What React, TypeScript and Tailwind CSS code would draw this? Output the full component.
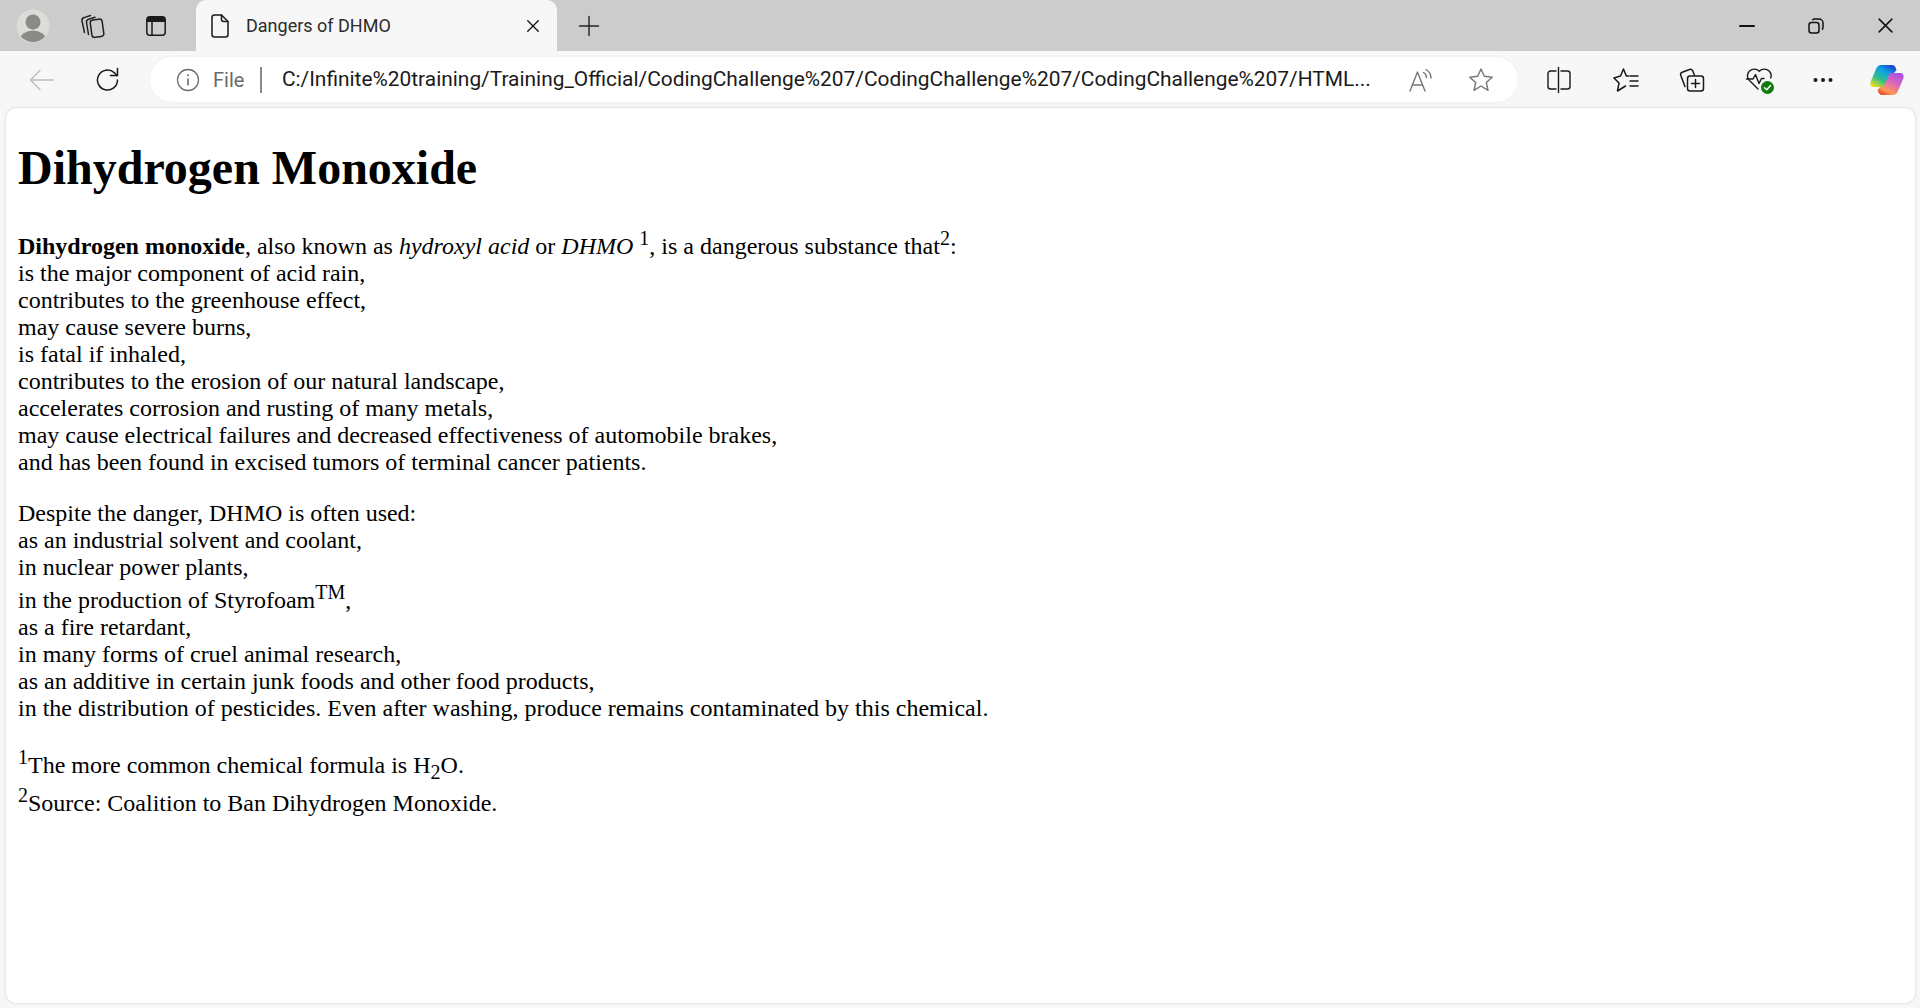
import React from 'react';

const stroke = { fill: 'none', stroke: '#222', strokeWidth: 1.5, strokeLinecap: 'round', strokeLinejoin: 'round' } as const;

const Avatar = () => (
  <svg width="34" height="34" viewBox="0 0 34 34">
    <defs>
      <clipPath id="av"><circle cx="17" cy="17" r="16" /></clipPath>
    </defs>
    <circle cx="17" cy="17" r="16.5" fill="#dcdcd8" />
    <g clipPath="url(#av)" fill="#8b8a86">
      <circle cx="17" cy="13" r="7.5" />
      <ellipse cx="17" cy="31" rx="13" ry="9.5" />
    </g>
  </svg>
);

const CollectionsTab = () => (
  <svg width="26" height="26" viewBox="0 0 26 26" {...stroke}>
    <rect x="12" y="6.500" width="12" height="17.500" rx="3" transform="rotate(-8 18 15)" />
    <path d="M9.500 21.500 7.500 9.500a3 3 0 0 1 2.300-3.300L16 4.200" />
    <path d="M5.500 19.500 3 8a3 3 0 0 1 2.200-3.400L11.500 2.500" />
  </svg>
);

const TabsIcon = () => (
  <svg width="24" height="24" viewBox="0 0 24 24">
    <rect x="2.800" y="2.800" width="18.400" height="18.400" rx="3" fill="none" stroke="#1a1a1a" strokeWidth="1.500" />
    <path d="M5 2.800h14a2.200 2.200 0 0 1 2.200 2.200v3H2.800V5A2.200 2.200 0 0 1 5 2.800Z" fill="#1a1a1a" />
    <path d="M8 8v13" stroke="#1a1a1a" strokeWidth="1.500" />
  </svg>
);

const DocIcon = () => (
  <svg width="22" height="26" viewBox="0 0 22 26" {...stroke} stroke="#1a1a1a">
    <path d="M5 2h7.500L19 8.500V21.500A2.500 2.500 0 0 1 16.500 24h-11A2.500 2.500 0 0 1 3 21.500V4.500A2.500 2.500 0 0 1 5 2Z" />
    <path d="M12.500 2v4.500a2 2 0 0 0 2 2H19" />
  </svg>
);

const Cross = ({ size, width = 1.5 }: { size: number; width?: number }) => (
  <svg width={size} height={size} viewBox="0 0 16 16" fill="none" stroke="#111" strokeWidth={width} strokeLinecap="round">
    <path d="M2 2l12 12M14 2 2 14" />
  </svg>
);

const Plus = () => (
  <svg width="22" height="22" viewBox="0 0 22 22" fill="none" stroke="#222" strokeWidth="1.400" strokeLinecap="round">
    <path d="M11 1.500v19M1.500 11h19" />
  </svg>
);

const Minimize = () => (
  <svg width="16" height="4" viewBox="0 0 16 4"><rect y="1" width="16" height="2" rx="1" fill="#111" /></svg>
);

const Restore = () => (
  <svg width="16" height="16" viewBox="0 0 16 16" fill="none" stroke="#111" strokeWidth="1.500">
    <rect x="1" y="4.500" width="10" height="10.500" rx="2.500" />
    <path d="M4.500 2.200A2 2 0 0 1 6.200 1H11a4 4 0 0 1 4 4v4.800a2 2 0 0 1-1.200 1.700" />
  </svg>
);

const BackArrow = () => (
  <svg width="26" height="24" viewBox="0 0 26 24" fill="none" stroke="#bdbdbd" strokeWidth="1.400" strokeLinecap="round" strokeLinejoin="round">
    <path d="M1.500 12h23M11 2.500 1.500 12l9.500 9.500" />
  </svg>
);

const Refresh = () => (
  <svg width="26" height="28" viewBox="0 0 26 28" fill="none" stroke="#1a1a1a" strokeWidth="1.500" strokeLinecap="round" strokeLinejoin="round">
    <path d="M22.500 14a10 10 0 1 1-3.300-7.400l2.800 2.900" />
    <path d="M22.500 2.500v7h-7" />
  </svg>
);

const Info = () => (
  <svg width="24" height="24" viewBox="0 0 24 24" fill="none" stroke="#6e6e6e" strokeWidth="1.300">
    <circle cx="12" cy="12" r="10.500" />
    <path d="M12 10.500v7" strokeWidth="1.600" />
    <circle cx="12" cy="7.300" r="1" fill="#6e6e6e" stroke="none" />
  </svg>
);

const ReadAloud = () => (
  <svg width="26" height="26" viewBox="0 0 26 26" fill="none" stroke="#767676" strokeWidth="1.400" strokeLinecap="round" strokeLinejoin="round">
    <path d="M2 24 9.500 5 17 24M4.500 18h10" />
    <path d="M15.500 5.500a6 6 0 0 1 3 5M18 2.500a10 10 0 0 1 5 8.500" />
  </svg>
);

const Star = () => (
  <svg width="26" height="26" viewBox="0 0 26 26" fill="none" stroke="#767676" strokeWidth="1.400" strokeLinejoin="round">
    <path d="m13 2 3.300 7.300 7.900.9-5.900 5.300 1.700 7.800L13 19l-7 4.300 1.700-7.800-5.900-5.300 7.900-.9L13 2Z" />
  </svg>
);

const SplitView = () => (
  <svg width="26" height="28" viewBox="0 0 26 28" fill="none" stroke="#1a1a1a" strokeWidth="1.400" strokeLinecap="round">
    <path d="M10 5H4.500A2.500 2.500 0 0 0 2 7.500v13A2.500 2.500 0 0 0 4.500 23H10" />
    <path d="M15 5h6.500A2.500 2.500 0 0 1 24 7.500v13a2.500 2.500 0 0 1-2.500 2.500H15" />
    <path d="M12.500 1.500v25" />
  </svg>
);

const Favorites = () => (
  <svg width="26" height="28" viewBox="0 0 26 28" fill="none" stroke="#1a1a1a" strokeWidth="1.500" strokeLinecap="round" strokeLinejoin="round">
    <path d="M15.500 10h-2.200L10.500 3 7.500 10 1 12l5 5-1.500 8 8-5" />
    <path d="M17 10h8M17 15h8M17 20h8" />
  </svg>
);

const CollectionsAdd = () => (
  <svg width="26" height="28" viewBox="0 0 26 28" fill="none" stroke="#1a1a1a" strokeWidth="1.500" strokeLinecap="round" strokeLinejoin="round">
    <rect x="8.500" y="10" width="16" height="15" rx="2.500" />
    <path d="M16.500 13.500v8M12.500 17.500h8" />
    <path d="M6 20.500 1.800 9.500a2.500 2.500 0 0 1 1.400-3.200L10.500 3.500a2.500 2.500 0 0 1 3.200 1.300l1.800 4.500" />
  </svg>
);

const HeartCheck = () => (
  <svg width="30" height="30" viewBox="0 0 30 30">
    <path d="M13 24 4.500 15.500a6.500 6.500 0 0 1 0-9.500 7 7 0 0 1 9.800.2 7 7 0 0 1 9.800-.2 6.500 6.500 0 0 1 1.600 7" fill="none" stroke="#1a1a1a" strokeWidth="1.400" strokeLinecap="round" />
    <path d="M1.500 14H8l2.500-4.500 3.500 9 2.500-5h2.500" fill="none" stroke="#1a1a1a" strokeWidth="1.400" strokeLinecap="round" strokeLinejoin="round" />
    <circle cx="22.500" cy="22.500" r="6.500" fill="#107c10" />
    <path d="m19.500 22.700 2.200 2.100 3.800-4.200" fill="none" stroke="#fff" strokeWidth="1.500" strokeLinecap="round" strokeLinejoin="round" />
  </svg>
);

const Dots = () => (
  <svg width="20" height="6" viewBox="0 0 20 6" fill="#1a1a1a">
    <circle cx="2.500" cy="3" r="2" />
    <circle cx="10" cy="3" r="2" />
    <circle cx="17.500" cy="3" r="2" />
  </svg>
);

const Copilot = () => (
  <svg width="34" height="30" viewBox="0 0 34 30">
    <defs>
      <linearGradient id="cpA" x1="0.800" y1="0" x2="0.150" y2="1">
        <stop offset="0" stopColor="#1a3fd0" />
        <stop offset="0.300" stopColor="#0f9fe8" />
        <stop offset="0.650" stopColor="#30c090" />
        <stop offset="1" stopColor="#f5dc10" />
      </linearGradient>
      <linearGradient id="cpB" x1="0.800" y1="0" x2="0.200" y2="1">
        <stop offset="0" stopColor="#a850e8" />
        <stop offset="0.450" stopColor="#e068b8" />
        <stop offset="0.800" stopColor="#ff9a50" />
        <stop offset="1" stopColor="#e8452c" />
      </linearGradient>
    </defs>
    <path d="M11 0H22C24 0 25.500 1.500 26.500 5L24 8C21 8 20 9 19 11L14 22H4C1 22 0 20 .5 17L6 4C7 1.500 9 0 11 0Z" fill="url(#cpA)" />
    <path d="M23 30H12C10 30 8.500 28.500 7.500 25L10 22C13 22 14 21 15 19L20 8H30C33 8 34 10 33.500 13L28 26C27 28.500 25 30 23 30Z" fill="url(#cpB)" />
  </svg>
);

const Sup = ({ children }: { children: React.ReactNode }) => (
  <sup className="static align-super text-[20px] leading-[normal]">{children}</sup>
);

export default function App() {
  return (
    <div className="h-[1008px] overflow-hidden bg-[#f7f7f7] font-['Roboto',sans-serif]">
      {/* title bar */}
      <div className="flex h-[51px] items-center bg-[#cccccc]">
        <div className="flex w-[196px] items-center pl-[16px]">
          <Avatar />
          <div className="ml-[29px] flex w-[26px] justify-center"><CollectionsTab /></div>
          <div className="ml-[39px] flex w-[24px] justify-center"><TabsIcon /></div>
        </div>
        <div className="flex h-[51px] w-[361px] items-center rounded-t-[10px] bg-[#f7f7f7] pl-[13px] pr-[17px]">
          <DocIcon />
          <span className="ml-[15px] flex-1 text-[18px] text-[#2b2b2b]">Dangers of DHMO</span>
          <Cross size={14} />
        </div>
        <div className="ml-[21px]"><Plus /></div>
        <div className="ml-auto flex items-center pr-[26px]">
          <Minimize />
          <div className="ml-[53px]"><Restore /></div>
          <div className="ml-[53px]"><Cross size={17} width={1.400} /></div>
        </div>
      </div>

      {/* toolbar */}
      <div className="flex h-[57px] items-center">
        <div className="ml-[29px] flex w-[26px]"><BackArrow /></div>
        <div className="ml-[40px] flex w-[26px]"><Refresh /></div>
        <div className="ml-[29px] flex h-[45px] w-[1368px] items-center rounded-full bg-white pl-[26px] pr-[24px] shadow-[0_0_3px_rgba(0,0,0,0.06)]">
          <Info />
          <span className="ml-[13px] text-[20px] text-[#6b6b6b]">File</span>
          <span className="ml-[16px] h-[26px] w-[1.500px] bg-[#8a8a8a]" />
          <span className="ml-[20px] mt-[1px] whitespace-nowrap text-[20.900px] text-[#1a1a1a]">
            C:/Infinite%20training/Training_Official/CodingChallenge%207/CodingChallenge%207/CodingChallenge%207/HTML...
          </span>
          <div className="ml-auto flex items-center gap-[34px]">
            <ReadAloud />
            <Star />
          </div>
        </div>
        <div className="ml-[28px] flex items-center">
          <SplitView />
          <div className="ml-[41px]"><Favorites /></div>
          <div className="ml-[40px]"><CollectionsAdd /></div>
          <div className="ml-[40px]"><HeartCheck /></div>
          <div className="ml-[38px]"><Dots /></div>
          <div className="ml-[37px]"><Copilot /></div>
        </div>
      </div>

      {/* page */}
      <div className="ml-[6px] mr-[5px] h-[895px] overflow-hidden rounded-[10px] bg-white shadow-[0_0_3px_rgba(0,0,0,0.18)]">
        <div className="px-[12px] font-['Liberation_Serif',serif] text-[24px] leading-[normal] text-black">
          <h1 className="my-[32px] text-[48px] font-bold leading-[normal]">Dihydrogen Monoxide</h1>
          <p className="my-[24px]">
            <b>Dihydrogen monoxide</b>, also known as <i>hydroxyl acid</i> or <i>DHMO</i> <Sup>1</Sup>, is a dangerous substance that<Sup>2</Sup>:<br />
            is the major component of acid rain,<br />
            contributes to the greenhouse effect,<br />
            may cause severe burns,<br />
            is fatal if inhaled,<br />
            contributes to the erosion of our natural landscape,<br />
            accelerates corrosion and rusting of many metals,<br />
            may cause electrical failures and decreased effectiveness of automobile brakes,<br />
            and has been found in excised tumors of terminal cancer patients.
          </p>
          <p className="my-[24px]">
            Despite the danger, DHMO is often used:<br />
            as an industrial solvent and coolant,<br />
            in nuclear power plants,<br />
            in the production of Styrofoam<Sup>TM</Sup>,<br />
            as a fire retardant,<br />
            in many forms of cruel animal research,<br />
            as an additive in certain junk foods and other food products,<br />
            in the distribution of pesticides. Even after washing, produce remains contaminated by this chemical.
          </p>
          <p className="my-[24px]">
            <Sup>1</Sup>The more common chemical formula is H<sub className="static align-sub text-[20px] leading-[normal]">2</sub>O.<br />
            <Sup>2</Sup>Source: Coalition to Ban Dihydrogen Monoxide.
          </p>
        </div>
      </div>
    </div>
  );
}
